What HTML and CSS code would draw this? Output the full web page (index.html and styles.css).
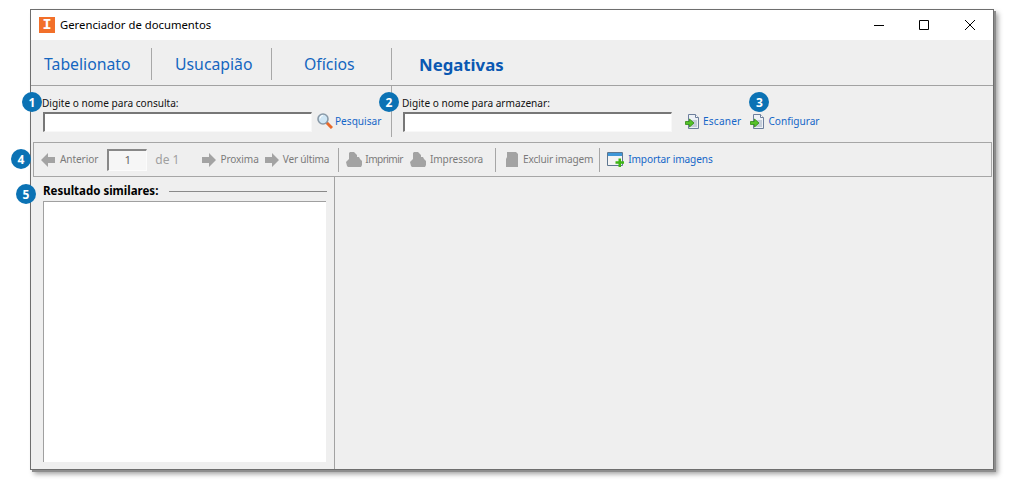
FILE: index.html
```html
<!DOCTYPE html>
<html lang="pt">
<head>
<meta charset="utf-8">
<title>Gerenciador de documentos</title>
<link rel="stylesheet" href="styles.css">
</head>
<body>
<svg class="defs" width="0" height="0" aria-hidden="true">
  <defs>
    <symbol id="arrow-right" viewBox="0 0 14 14"><path d="M0 4h7V0l7 7-7 7v-4H0z" fill="#a3a3a3"/></symbol>
    <symbol id="arrow-left" viewBox="0 0 14 14"><path d="M14 4H7V0L0 7l7 7v-4h7z" fill="#a3a3a3"/></symbol>
    <symbol id="printer" viewBox="0 0 16 15"><path d="M3 1l1-1h4l3 3v2h2l1 2 2 2v4l-1 2H2l-1-1-1-4 2-2 1-1z" fill="#a3a3a3"/></symbol>
    <symbol id="trash" viewBox="0 0 14 15"><path d="M2 0h9l2 2v13H1V7L2 5z" fill="#a3a3a3"/></symbol>
    <symbol id="doc" viewBox="0 0 14 15">
      <path d="M3.500 0.500h7l3 3v11h-10z" fill="#eef1f6" stroke="#6d7f9c"/>
      <path d="M10.500 0.500v3h3" fill="#fff" stroke="#6d7f9c"/>
      <path d="M5 6h7v7H5z" fill="#c5cdd9"/>
      <path d="M0.500 7.500h4V5L9 9l-4.500 4v-2.500h-4z" fill="#55c22a" stroke="#2f8a14" stroke-width="0.800"/>
    </symbol>
  </defs>
</svg>
<main class="window">
  <header class="titlebar">
    <span class="logo">I</span>
    <span class="title">Gerenciador de documentos</span>
    <div class="controls">
      <svg class="ctl ctl-min" viewBox="0 0 10 10"><path d="M0 5.500h10" stroke="#000"/></svg>
      <svg class="ctl ctl-max" viewBox="0 0 10 10"><path d="M0.500 0.500h9v9h-9z" fill="none" stroke="#000"/></svg>
      <svg class="ctl ctl-close" viewBox="0 0 10 10"><path d="M0 0l10 10M10 0L0 10" stroke="#000" stroke-width="1"/></svg>
    </div>
  </header>

  <nav class="tabs">
    <a class="tab tab-1">Tabelionato</a>
    <a class="tab tab-2">Usucapião</a>
    <a class="tab tab-3">Ofícios</a>
    <a class="tab tab-4">Negativas</a>
  </nav>

  <section class="form">
    <div class="field field-search">
      <span class="badge badge-1">1</span>
      <label class="label">Digite o nome para consulta:</label>
      <div class="field-row">
        <input class="text-input" type="text">
        <svg class="i-search" viewBox="0 0 16 16">
          <path d="M9.500 9.500L15 15" stroke="#e8692a" stroke-width="3"/>
          <circle cx="6" cy="6" r="5" fill="#cfe6f5" stroke="#8a9aa8" stroke-width="1.600"/>
          <path d="M3 5.500a3 3 0 0 1 3-3" stroke="#fff" fill="none"/>
        </svg>
        <a class="link link-search">Pesquisar</a>
      </div>
    </div>
    <div class="field field-store">
      <span class="badge badge-2">2</span>
      <label class="label">Digite o nome para armazenar:</label>
      <div class="field-row">
        <input class="text-input" type="text">
        <svg class="i-doc i-scan"><use href="#doc"/></svg>
        <a class="link link-scan">Escaner</a>
        <span class="config">
          <span class="badge badge-3">3</span>
          <svg class="i-doc"><use href="#doc"/></svg>
          <a class="link link-config">Configurar</a>
        </span>
      </div>
    </div>
  </section>

  <section class="toolbar">
    <span class="badge badge-4">4</span>
    <svg class="i-arrow"><use href="#arrow-left"/></svg>
    <span class="tool t-prev">Anterior</span>
    <input class="page-input" type="text" value="1">
    <span class="of">de 1</span>
    <svg class="i-arrow a-next"><use href="#arrow-right"/></svg>
    <span class="tool t-next">Proxima</span>
    <svg class="i-arrow a-last"><use href="#arrow-right"/></svg>
    <span class="tool t-last">Ver última</span>
    <span class="vsep s-1"></span>
    <svg class="i-print"><use href="#printer"/></svg>
    <span class="tool t-print">Imprimir</span>
    <svg class="i-print p-2"><use href="#printer"/></svg>
    <span class="tool t-printer">Impressora</span>
    <span class="vsep s-2"></span>
    <svg class="i-trash"><use href="#trash"/></svg>
    <span class="tool t-del">Excluir imagem</span>
    <span class="vsep s-3"></span>
    <svg class="i-import" viewBox="0 0 17 15">
      <path d="M0.500 0.500h15v13h-15z" fill="#f4f4f4" stroke="#5d7690"/>
      <path d="M1 1h14v3H1z" fill="#3f97d8"/>
      <path d="M8.500 10.500h8.500M12.750 6.500v8.500" stroke="#3fb515" stroke-width="2.500"/>
    </svg>
    <a class="link t-import">Importar imagens</a>
  </section>

  <section class="content">
    <aside class="results">
      <span class="badge badge-5">5</span>
      <div class="results-head">
        <h2 class="results-title">Resultado similares:</h2>
        <span class="results-rule"></span>
      </div>
      <div class="results-list"></div>
    </aside>
    <div class="viewer"></div>
  </section>
</main>
</body>
</html>
```

FILE: styles.css
```css
* { box-sizing: border-box; }

html, body { margin: 0; background: #fff; }

body {
  width: 1014px;
  height: 486px;
  padding: 9px 20px 16px 30px;
  overflow: hidden;
  font-family: "Noto Sans", sans-serif;
  font-size: 10.100px;
  color: #000;
}

.defs { position: absolute; }

.window {
  width: 964px;
  height: 461px;
  display: flex;
  flex-direction: column;
  background: #efefef;
  border: 1px solid #6e6e6e;
  box-shadow: 2px 2px 0 #8d8d8d, 4px 4px 5px rgba(0, 0, 0, .38);
}

/* Title bar */
.titlebar {
  height: 30px;
  flex: none;
  display: flex;
  align-items: center;
  padding-left: 8px;
  background: #fff;
}
.logo {
  width: 16px;
  height: 16px;
  display: flex;
  align-items: center;
  justify-content: center;
  background: #f2702a;
  color: #fff;
  font: bold 15px "Liberation Mono", monospace;
}
.title { margin: -2px 0 0 5px; font-size: 11.300px; }
.controls { margin-left: auto; display: flex; align-items: center; }
.ctl { width: 10px; height: 10px; display: block; }
.ctl-min { margin-right: 35px; }
.ctl-max { margin-right: 36px; }
.ctl-close { margin-right: 18px; }

/* Tabs */
.tabs {
  height: 46px;
  flex: none;
  display: flex;
  align-items: flex-start;
  padding-top: 8px;
  border-bottom: 1px solid #a2a2a2;
}
.tab {
  height: 32px;
  display: flex;
  align-items: center;
  font-size: 15.800px;
  color: #1466c0;
  border-right: 1px solid #a8a8a8;
}
.tab-1 { width: 121px; padding-left: 13px; }
.tab-2 { width: 120px; padding-left: 23px; }
.tab-3 { width: 120px; padding-left: 32px; }
.tab-4 { padding-left: 27px; border-right: 0; font-size: 16.800px; font-weight: 700; color: #0a58b2; }

/* Form */
.form {
  height: 56px;
  flex: none;
  display: flex;
}
.field { position: relative; padding-top: 10px; }
.field-search { width: 361px; height: 51px; padding-left: 11px; border-right: 1px solid #a8a8a8; }
.field-store { flex: 1; padding-left: 10px; }
.label { display: block; height: 16px; line-height: 14px; color: #111; }
.field-row { display: flex; align-items: center; height: 20px; padding-left: 1px; }
.text-input {
  width: 269px;
  height: 20px;
  padding: 0;
  background: #fff;
  border: 1px solid #f8f8f8;
  border-top: 2px solid #777;
  border-left: 2px solid #777;
  border-radius: 0;
}
.link { color: #1466c8; white-space: nowrap; margin-top: -2px; }
.i-search { width: 16px; height: 16px; margin: -2px 0 0 5px; }
.link-search { margin-left: 2px; }
.i-doc { width: 14px; height: 15px; flex: none; margin-top: -1px; }
.i-scan { margin-left: 13px; }
.link-scan { margin-left: 4px; letter-spacing: .2px; }
.config { position: relative; display: flex; align-items: center; margin-left: 9px; }
.link-config { margin-left: 4px; }

/* Badges */
.badge {
  position: absolute;
  width: 20px;
  height: 20px;
  display: flex;
  align-items: center;
  justify-content: center;
  border-radius: 50%;
  background: #0b72b4;
  color: #fff;
  font: 700 12px "Open Sans", sans-serif;
}
.badge-1 { left: -9px; top: 6px; }
.badge-2 { left: -13px; top: 6px; }
.badge-3 { left: -1px; top: -23px; }
.badge-4 { left: -23px; top: 6px; }
.badge-5 { left: -15px; top: 7px; }

/* Toolbar */
.toolbar {
  position: relative;
  height: 35px;
  flex: none;
  margin: 0 1px 0 2px;
  display: flex;
  align-items: center;
  padding-left: 7px;
  border: 1px solid #a6a6a6;
}
.tool { color: #7b7b7b; white-space: nowrap; margin-top: -2px; }
.toolbar .link { margin-top: -2px; }
.i-arrow { width: 14px; height: 14px; flex: none; }
.t-prev { margin-left: 5px; letter-spacing: -.1px; }
.page-input {
  width: 40px;
  height: 22px;
  margin-left: 9px;
  padding: 0 0 2px;
  text-align: center;
  font: 11.500px "Noto Sans", sans-serif;
  color: #666;
  background: #f6f6f6;
  border: 1px solid #fbfbfb;
  border-top: 2px solid #888;
  border-left: 2px solid #888;
  border-radius: 0;
}
.of { margin-left: 8px; font-size: 12px; color: #a0a0a0; }
.a-next { margin-left: 23px; }
.t-next { margin-left: 4px; letter-spacing: -.1px; }
.a-last { margin-left: 6px; }
.t-last { margin-left: 4px; letter-spacing: -.2px; }
.vsep { width: 1px; height: 24px; flex: none; background: #a6a6a6; }
.s-1 { margin-left: 9px; }
.i-print { width: 16px; height: 15px; flex: none; margin-left: 7px; }
.t-print { margin-left: 3px; letter-spacing: -.55px; }
.p-2 { margin-left: 7px; }
.t-printer { margin-left: 4px; letter-spacing: -.1px; }
.s-2 { margin-left: 12px; }
.i-trash { width: 14px; height: 15px; flex: none; margin-left: 9px; }
.t-del { margin-left: 4px; letter-spacing: -.2px; }
.s-3 { margin-left: 6px; }
.i-import { width: 17px; height: 15px; flex: none; margin-left: 7px; }
.t-import { margin-left: 4px; letter-spacing: -.1px; }

/* Content */
.content { flex: 1; display: flex; min-height: 0; }
.results {
  position: relative;
  width: 304px;
  padding: 7px 8px 7px 12px;
  display: flex;
  flex-direction: column;
  border-right: 1px solid #a2a2a2;
}
.results-head { height: 17px; display: flex; align-items: flex-start; }
.results-title { margin: 0; font-size: 11.500px; font-weight: 700; line-height: 14px; white-space: nowrap; }
.results-rule { flex: 1; height: 1px; margin: 7px -1px 0 11px; background: #8a8a8a; }
.results-list { flex: 1; background: #fff; border-top: 1px solid #a0a0a0; border-left: 1px solid #a0a0a0; }
.viewer { flex: 1; }
```
